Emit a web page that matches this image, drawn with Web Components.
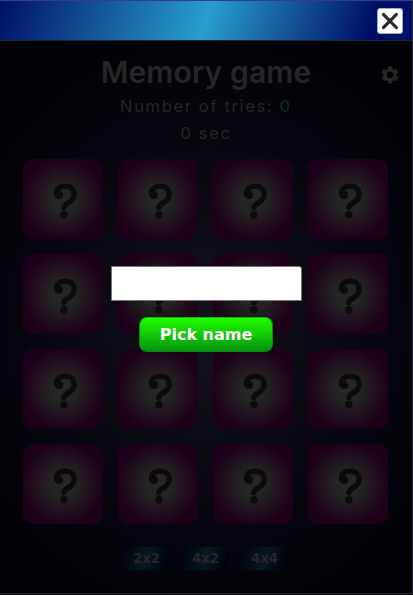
<!DOCTYPE html>
<html lang="en"><head><meta charset="utf-8"><title>Memory game</title>
<style>html,body{margin:0;height:100%;background:#020207;overflow:hidden}</style></head>
<body><memory-app></memory-app>
<script>
const define=(name,html,setup)=>customElements.define(name,class extends HTMLElement{
  constructor(){super();const t=document.createElement('template');t.innerHTML=html;this.attachShadow({mode:'open'}).append(t.content.cloneNode(true));if(setup)setup(this.shadowRoot);}
});
define('title-bar',`<style>
:host{display:flex;box-sizing:border-box;height:41px;border-top:1px solid #373b8a;border-bottom:1px solid #222038;padding:7px 9px 0 0;justify-content:flex-end;background:linear-gradient(108deg,#001064 0%,#289fca 50%,#001064 89%)}
button{box-sizing:border-box;width:26px;height:26px;padding:0;border:1px solid #9fa9cf;border-radius:3px;background:#fff;display:grid;place-items:center}
svg{display:block}</style><button aria-label="Close"><svg width="24" height="24" viewBox="0 0 24 24"><path d="M5.4 5.4 18.4 18.6M18.4 5.4 5.4 18.6" stroke="#292929" stroke-width="3.1" stroke-linecap="round"/></svg></button>`);
define('memory-card',`<style>
:host{display:grid;place-items:center;width:80px;height:80px;border-radius:10px;background:radial-gradient(circle at 50% 50%,#262626 0%,#242424 22%,#1d0019 73%)}
svg{display:block}</style><svg width="80" height="80" viewBox="0 0 80 80" fill="none" stroke="#0b0b0a" stroke-linecap="round"><path d="M33.6 35.4C32.6 31.2 36 27.1 42 27.1C48.2 27.1 51.2 31 51.2 35.2C51.2 39.8 48.6 42 44.9 44.1C41.8 45.9 41 46.6 40.8 48.8" stroke-width="5.3"/><circle cx="36" cy="36" r="4" fill="#0b0b0a" stroke="none"/><circle cx="40.9" cy="55.7" r="3.7" fill="#0b0b0a" stroke="none"/></svg>`);
define('size-button',`<style>
:host{display:block}
button{display:block;box-sizing:border-box;width:48px;height:25px;padding:0;border:1px solid #030711;border-radius:5px;background:linear-gradient(108deg,#000211,#06191e 50%,#000211 89%);color:#262626;font:bold 13.333px/23px "DejaVu Sans",sans-serif}</style><button><slot></slot></button>`);
define('game-board',`<style>
:host{display:flex;flex-direction:column;align-items:center;box-sizing:border-box;flex:1;position:relative;color:#262626;font-family:Inter,sans-serif}
h1{margin:13px 0 0 0;font-size:30px;line-height:36px;font-weight:600;letter-spacing:.15px;white-space:nowrap}
p{margin:6px 0 0;font-size:16.5px;line-height:21px;letter-spacing:1.65px;white-space:nowrap}
p b{font-weight:500;color:#062d18}
.grid{display:grid;grid-template-columns:repeat(4,80px);gap:15px;margin:15px 1px 0 0}
.sizes{display:flex;gap:11px;margin:22px 1px 0 0}
.gear{position:absolute;left:381px;top:25px}
</style><h1>Memory game</h1><p>Number of tries: <b>0</b></p><p>0 sec</p><div class="grid"></div>
<div class="sizes"><size-button>2x2</size-button><size-button>4x2</size-button><size-button>4x4</size-button></div>
<svg class="gear" width="18" height="18" viewBox="2 2 20 20"><path fill="#262626" d="M19.14 12.94c.04-.3.06-.61.06-.94 0-.32-.02-.64-.07-.94l2.03-1.58a.49.49 0 0 0 .12-.61l-1.92-3.32a.49.49 0 0 0-.59-.22l-2.39.96c-.5-.38-1.03-.7-1.62-.94l-.36-2.54a.48.48 0 0 0-.48-.41h-3.84c-.24 0-.43.17-.47.41l-.36 2.54c-.59.24-1.13.57-1.62.94l-2.39-.96a.48.48 0 0 0-.59.22L2.74 8.87a.47.47 0 0 0 .12.61l2.03 1.58c-.05.3-.09.63-.09.94s.02.64.07.94l-2.03 1.58a.49.49 0 0 0-.12.61l1.92 3.32c.12.22.37.29.59.22l2.39-.96c.5.38 1.03.7 1.62.94l.36 2.54c.05.24.24.41.48.41h3.84c.24 0 .44-.17.47-.41l.36-2.54c.59-.24 1.13-.56 1.62-.94l2.39.96c.22.08.47 0 .59-.22l1.92-3.32a.47.47 0 0 0-.12-.61zM12 15.6a3.6 3.6 0 1 1 0-7.2 3.6 3.6 0 0 1 0 7.2"/></svg>`,
r=>{const g=r.querySelector('.grid');for(let i=0;i<16;i++)g.append(document.createElement('memory-card'));});
define('name-dialog',`<style>
:host{position:absolute;left:0;top:266px;width:412px;display:flex;flex-direction:column;align-items:center;gap:16px}
input{box-sizing:border-box;width:191px;height:35px;margin-left:1px;border:1px solid #767676;border-radius:0 3px 0 0;background:#fff;padding:4px 8px;font:16px "DejaVu Sans",sans-serif;outline:0}
button{box-sizing:border-box;width:134px;height:35px;padding:0;border:1px solid #078c12;border-top-color:#15b408;border-radius:8px;background:linear-gradient(#20ff00,#05930f);color:#fff;font:bold 16px/33px "DejaVu Sans",sans-serif}</style><input aria-label="Name"><button>Pick name</button>`);
define('memory-app',`<style>
:host{display:flex;flex-direction:column;box-sizing:border-box;position:relative;width:413px;height:594px;border-right:1px solid #2a2840;border-bottom:1px solid #2b2730;background:radial-gradient(ellipse 68% 54% at 50% 55%,#14131d 0%,#07060f 60%,#020106 100%)}
</style><title-bar></title-bar><game-board></game-board><name-dialog></name-dialog>`);
</script></body></html>
